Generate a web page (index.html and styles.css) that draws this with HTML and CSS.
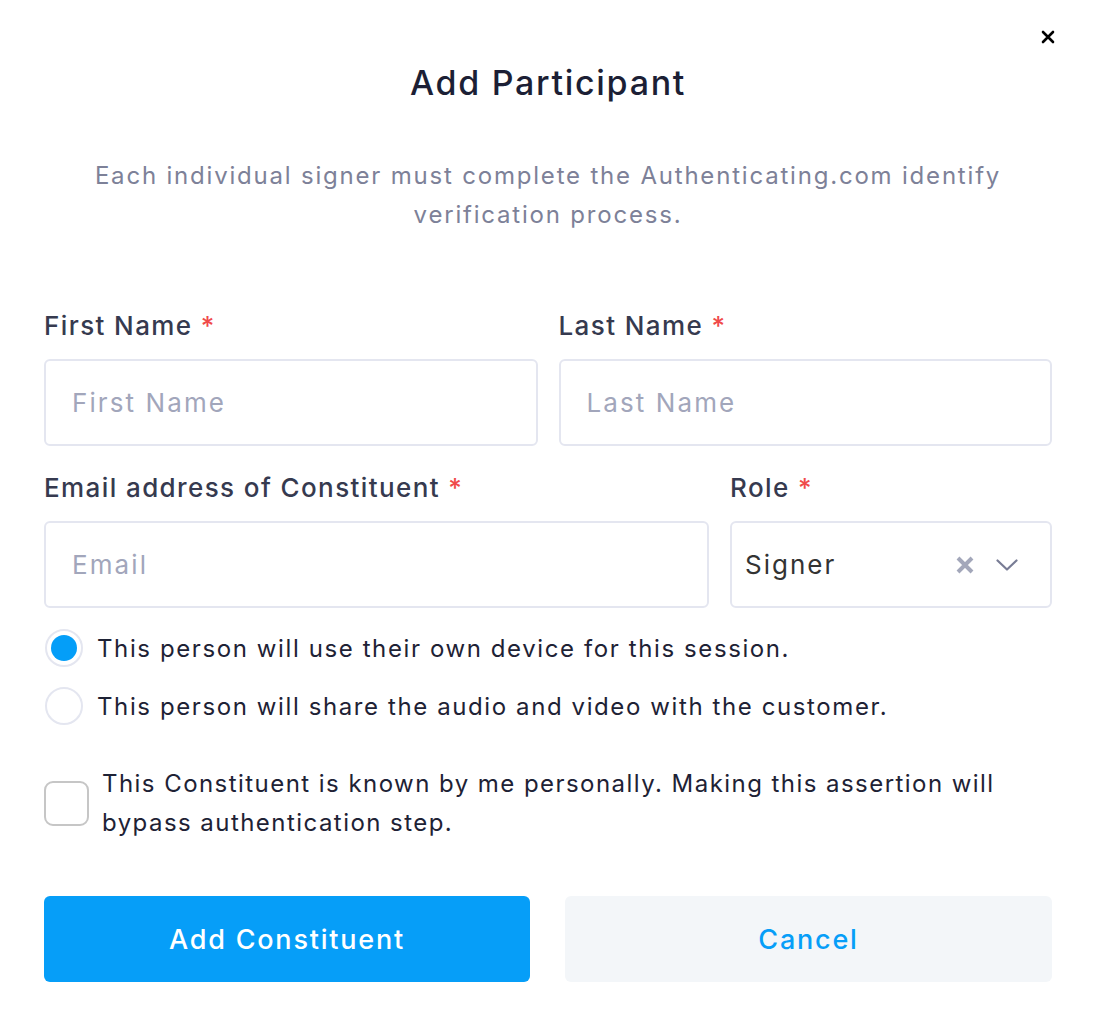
FILE: index.html
```html
<!DOCTYPE html>
<html lang="en">
<head>
    <meta charset="UTF-8">
    <title>Add Participant</title>
    <link rel="stylesheet" href="styles.css">
</head>
<body>
<div class="modal">
    <a class="close" href="#">
        <svg width="14" height="14" viewBox="0 0 14 14"><path d="M2 2L12 12M12 2L2 12" stroke="#000" stroke-width="2.6" stroke-linecap="round"/></svg>
    </a>
    <h1 class="title">Add Participant</h1>
    <p class="intro">Each individual signer must complete the Authenticating.com identify verification process.</p>

    <div class="row half">
        <div class="field">
            <label class="label">First Name <span class="req">*</span></label>
            <input class="input" type="text" placeholder="First Name">
        </div>
        <div class="field">
            <label class="label">Last Name <span class="req">*</span></label>
            <input class="input" type="text" placeholder="Last Name">
        </div>
    </div>
    <div class="row wide">
        <div class="field">
            <label class="label">Email address of Constituent <span class="req">*</span></label>
            <input class="input" type="text" placeholder="Email">
        </div>
        <div class="field">
            <label class="label">Role <span class="req">*</span></label>
            <div class="select">
                <span class="select-value">Signer</span>
                <svg class="clear" width="20" height="20" viewBox="0 0 20 20"><path d="M3 3L17 17M17 3L3 17" stroke="#a3a7ba" stroke-width="4"/></svg>
                <svg class="chevron" width="22" height="12" viewBox="0 0 22 12"><path d="M1.5 1.5L11 10.5L20.5 1.5" fill="none" stroke="#787c95" stroke-width="2.2" stroke-linecap="round" stroke-linejoin="round"/></svg>
            </div>
        </div>
    </div>

    <div class="radios">
        <label class="radio"><span class="dot checked"></span>This person will use their own device for this session.</label>
        <label class="radio"><span class="dot"></span>This person will share the audio and video with the customer.</label>
    </div>

    <label class="check">
        <span class="box"></span>
        <span class="check-text">This Constituent is known by me personally. Making this assertion will bypass authentication step.</span>
    </label>

    <div class="buttons">
        <button class="btn primary">Add Constituent</button>
        <button class="btn secondary">Cancel</button>
    </div>
</div>
</body>
</html>
```

FILE: styles.css
```css
*{padding:0;margin:0;box-sizing:border-box;}
body{background:#fff;font-family:Inter,"Open Sans",sans-serif;color:#1e2235;}
.modal{position:relative;width:1094px;padding:61px 42px 0 44px;}
.close{position:absolute;top:30px;right:39px;display:block;width:14px;height:14px;line-height:0;}
.title{text-align:center;font-size:34px;font-weight:500;line-height:44px;letter-spacing:1.7px;color:#1c1f35;}
.intro{margin:51px auto 0;width:930px;text-align:center;font-size:24px;line-height:39px;letter-spacing:1.8px;color:#7d8198;}
.row{display:grid;column-gap:21px;}
.half{grid-template-columns:1fr 1fr;margin-top:77px;}
.wide{grid-template-columns:665px 1fr;margin-top:27px;}
.label{display:block;font-size:26px;line-height:30px;font-weight:500;letter-spacing:1.4px;color:#363a4f;}
.req{color:#f04a4a;}
.input{display:block;width:100%;height:87px;margin-top:18px;border:2px solid #e4e6f0;border-radius:6px;padding:0 26px;font-family:inherit;font-size:26px;letter-spacing:2.1px;color:#333;outline:none;}
.input::placeholder{color:#a2a6bb;}
.select{display:flex;align-items:center;height:87px;margin-top:18px;border:2px solid #e4e6f0;border-radius:6px;padding:0 32px 0 13px;}
.select-value{flex:1;font-size:26px;letter-spacing:2px;color:#333;}
.clear{margin-right:21px;}
.radios{margin-top:11px;}
.radio{display:flex;align-items:center;height:58px;font-size:24px;letter-spacing:1.6px;color:#1e2235;}
.dot{flex:none;width:38px;height:38px;border-radius:50%;border:2px solid #e4e6f0;margin:0 14px 0 1px;display:flex;align-items:center;justify-content:center;}
.dot.checked::after{content:"";width:26px;height:26px;border-radius:50%;background:#049ef8;}
.check{display:flex;align-items:center;margin-top:29px;}
.box{flex:none;width:45px;height:45px;border:2px solid #c6c6c6;border-radius:9px;margin-right:13px;}
.check-text{font-size:24px;line-height:39px;letter-spacing:1.45px;color:#1e2235;}
.buttons{display:grid;grid-template-columns:486px 487px;column-gap:35px;margin-top:54px;}
.btn{height:86px;border:0;border-radius:6px;font-family:inherit;font-size:27px;font-weight:500;letter-spacing:1.8px;}
.primary{background:#069ef8;color:#fff;}
.secondary{background:#f3f6f9;color:#069ef8;}
```
